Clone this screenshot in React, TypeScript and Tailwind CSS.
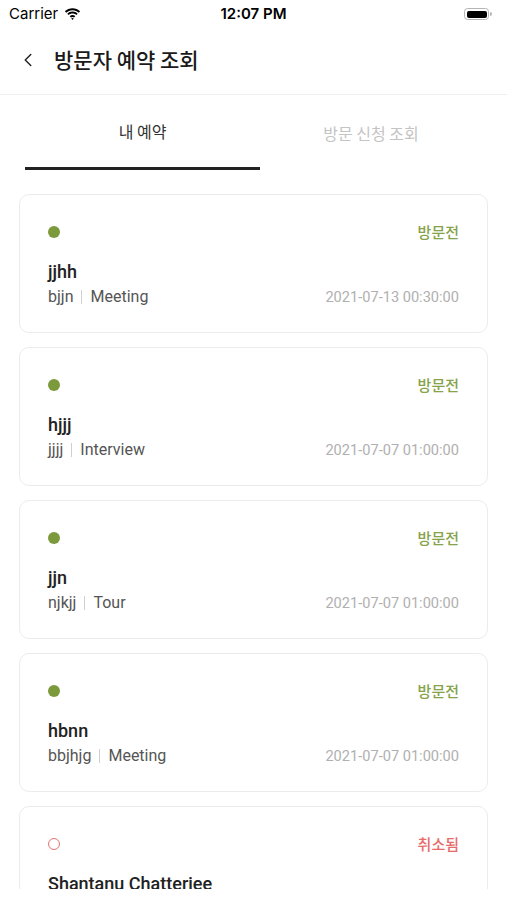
import { ChevronLeft } from "lucide-react";

type Booking = {
  name: string;
  host: string;
  purpose: string;
  date: string;
  status: "before" | "cancelled";
};

const bookings: Booking[] = [
  { name: "jjhh", host: "bjjn", purpose: "Meeting", date: "2021-07-13 00:30:00", status: "before" },
  { name: "hjjj", host: "jjjj", purpose: "Interview", date: "2021-07-07 01:00:00", status: "before" },
  { name: "jjn", host: "njkjj", purpose: "Tour", date: "2021-07-07 01:00:00", status: "before" },
  { name: "hbnn", host: "bbjhjg", purpose: "Meeting", date: "2021-07-07 01:00:00", status: "before" },
  { name: "Shantanu Chatterjee", host: "jjj", purpose: "Meeting", date: "2021-07-07 01:00:00", status: "cancelled" },
];

const kr = { fontFamily: '"Noto Sans CJK KR", "Noto Sans", sans-serif' };
const latin = { fontFamily: 'Roboto, "Noto Sans CJK KR", sans-serif' };

const StatusBar = () => (
  <div className="flex h-[28px] items-center justify-between px-[9px] text-[15px] text-black" style={{ fontFamily: "Inter, sans-serif" }}>
    <div className="flex w-[120px] items-center gap-[6px]">
      <span>Carrier</span>
      <svg width="17" height="12" viewBox="0 0 17 12">
        <path d="M8.5 2.2c2.4 0 4.6.9 6.3 2.5l1.3-1.4C14 1.3 11.4.2 8.5.2S3 1.3.9 3.3l1.3 1.4C3.9 3.1 6.1 2.2 8.5 2.2z" fill="#000" />
        <path d="M8.5 5.6c1.5 0 2.8.5 3.9 1.5l1.3-1.4C12.3 4.4 10.5 3.6 8.5 3.6s-3.8.8-5.2 2.1l1.3 1.4c1.1-1 2.4-1.5 3.9-1.5z" fill="#000" />
        <path d="M8.5 9c.6 0 1.1.2 1.5.6l1.3-1.4c-.8-.7-1.7-1.1-2.8-1.1s-2 .4-2.8 1.1L7 9.6C7.4 9.2 7.9 9 8.5 9z" fill="#000" />
        <path d="M8.5 12l1.3-1.4c-.4-.3-.8-.5-1.3-.5s-.9.2-1.3.5z" fill="#000" />
      </svg>
    </div>
    <span className="font-semibold">12:07 PM</span>
    <div className="flex w-[120px] justify-end pr-[6px]">
      <div className="flex items-center">
        <div className="flex h-[12px] w-[25px] items-center rounded-[3.5px] border border-[#b5b5b5] p-[1.5px]">
          <div className="h-full w-full rounded-[2px] bg-black" />
        </div>
        <div className="ml-[1px] h-[4px] w-[1.5px] rounded-r-sm bg-[#b5b5b5]" />
      </div>
    </div>
  </div>
);

const BookingCard = ({ b }: { b: Booking }) => {
  const before = b.status === "before";
  return (
    <div className="shrink-0 rounded-[10px] border border-[#ececec] bg-white px-[28px] pt-[27px] pb-[24px]">
      <div className="flex h-[20px] items-center justify-between">
        {before ? (
          <div className="h-[12px] w-[12px] rounded-full bg-[#7c9a3c]" />
        ) : (
          <div className="h-[12px] w-[12px] rounded-full border-[1.5px] border-[#e57373]" />
        )}
        <span className={`text-[15px] font-medium ${before ? "text-[#86a34a]" : "text-[#e86b6b]"}`} style={kr}>
          {before ? "방문전" : "취소됨"}
        </span>
      </div>
      <div className="mt-[18px] text-[18px] font-medium leading-[24px] text-[#222]" style={latin}>
        {b.name}
      </div>
      <div className="mt-[2px] flex items-center justify-between leading-[22px]" style={latin}>
        <div className="flex items-center text-[16px] text-[#555]">
          <span>{b.host}</span>
          <span className="mx-[8px] h-[14px] w-px bg-[#d0d0d0]" />
          <span>{b.purpose}</span>
        </div>
        <span className="text-[14.6px] text-[#b0b0b0]">{b.date}</span>
      </div>
    </div>
  );
};

export default function App() {
  return (
    <div className="flex h-[900px] w-[507px] flex-col overflow-hidden bg-white">
      <StatusBar />
      <div className="flex h-[67px] items-center border-b border-[#efefef] pb-[3px] pl-[17px]">
        <ChevronLeft className="h-[22px] w-[22px] text-[#222]" strokeWidth={1.6} />
        <h1 className="ml-[15px] text-[21px] font-medium text-[#1a1a1a]" style={kr}>
          방문자 예약 조회
        </h1>
      </div>
      <div className="flex px-[25px]" style={kr}>
        <div className="flex h-[75px] w-[235px] items-center justify-center border-b-[3px] border-[#222] text-[16px] text-[#333]">
          내 예약
        </div>
        <div className="flex h-[75px] flex-1 items-center justify-center text-[16px] text-[#c4c4c4]">
          방문 신청 조회
        </div>
      </div>
      <div className="flex h-[719px] flex-col gap-[14px] overflow-hidden px-[19px] pt-[24px]">
        {bookings.map((b, i) => (
          <BookingCard key={i} b={b} />
        ))}
      </div>
    </div>
  );
}
